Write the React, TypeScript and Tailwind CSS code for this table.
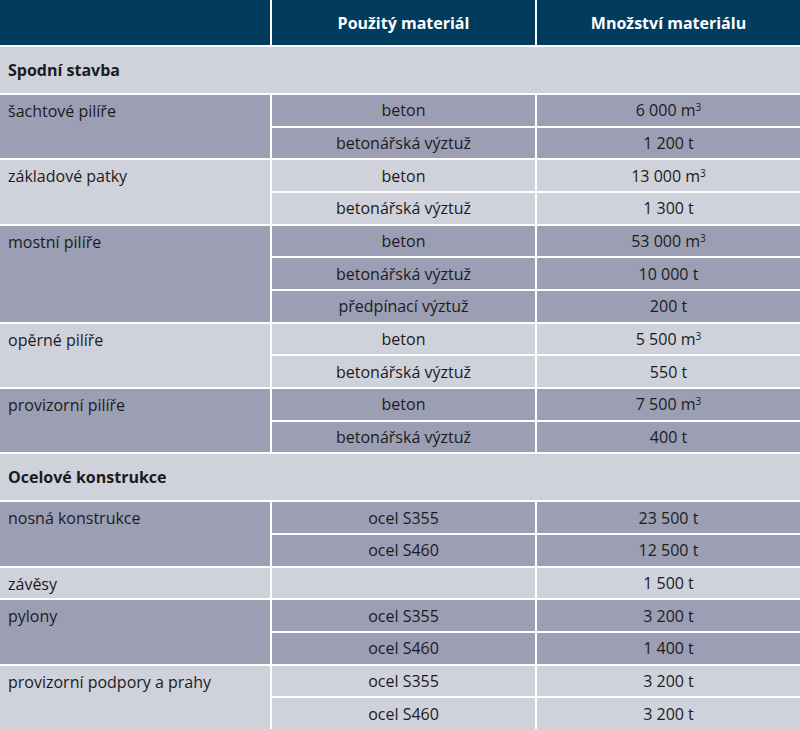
type Sub = { material: string; amount: string; m3?: boolean }
type Group = { name: string; dark: boolean; rows: Sub[] }
type Section = { title: string; groups: Group[] }

const sections: Section[] = [
  {
    title: 'Spodní stavba',
    groups: [
      { name: 'šachtové pilíře', dark: true, rows: [
        { material: 'beton', amount: '6 000 m', m3: true },
        { material: 'betonářská výztuž', amount: '1 200 t' },
      ] },
      { name: 'základové patky', dark: false, rows: [
        { material: 'beton', amount: '13 000 m', m3: true },
        { material: 'betonářská výztuž', amount: '1 300 t' },
      ] },
      { name: 'mostní pilíře', dark: true, rows: [
        { material: 'beton', amount: '53 000 m', m3: true },
        { material: 'betonářská výztuž', amount: '10 000 t' },
        { material: 'předpínací výztuž', amount: '200 t' },
      ] },
      { name: 'opěrné pilíře', dark: false, rows: [
        { material: 'beton', amount: '5 500 m', m3: true },
        { material: 'betonářská výztuž', amount: '550 t' },
      ] },
      { name: 'provizorní pilíře', dark: true, rows: [
        { material: 'beton', amount: '7 500 m', m3: true },
        { material: 'betonářská výztuž', amount: '400 t' },
      ] },
    ],
  },
  {
    title: 'Ocelové konstrukce',
    groups: [
      { name: 'nosná konstrukce', dark: true, rows: [
        { material: 'ocel S355', amount: '23 500 t' },
        { material: 'ocel S460', amount: '12 500 t' },
      ] },
      { name: 'závěsy', dark: false, rows: [
        { material: '', amount: '1 500 t' },
      ] },
      { name: 'pylony', dark: true, rows: [
        { material: 'ocel S355', amount: '3 200 t' },
        { material: 'ocel S460', amount: '1 400 t' },
      ] },
      { name: 'provizorní podpory a prahy', dark: false, rows: [
        { material: 'ocel S355', amount: '3 200 t' },
        { material: 'ocel S460', amount: '3 200 t' },
      ] },
    ],
  },
]

const span: Record<number, string> = { 1: 'row-span-1', 2: 'row-span-2', 3: 'row-span-3' }

export default function App() {
  return (
    <div
      className="w-[800px] h-[729px] bg-white text-[16px] text-[#1b1b1f] overflow-hidden"
      style={{ fontFamily: '"Open Sans", "Noto Sans", sans-serif' }}
    >
      <div className="grid h-full gap-[2px] grid-cols-[270px_263px_1fr] grid-rows-[45px_46px_repeat(11,minmax(0,1fr))_46px_repeat(7,minmax(0,1fr))]">
        {/* Header */}
        <div className="bg-[#013c5e]" />
        <div className="bg-[#013c5e] text-white font-bold flex items-center justify-center">Použitý materiál</div>
        <div className="bg-[#013c5e] text-white font-bold flex items-center justify-center">Množství materiálu</div>

        {sections.map(sec => (
          <Sec key={sec.title} sec={sec} />
        ))}
      </div>
    </div>
  )
}

function Sec({ sec }: { sec: Section }) {
  return (
    <>
      <div className="col-span-3 bg-[#cfd2db] font-bold flex items-center px-2">{sec.title}</div>
      {sec.groups.map(g => {
        const bg = g.dark ? 'bg-[#9c9fb3]' : 'bg-[#cfd2db]'
        return (
          <Grp key={g.name} g={g} bg={bg} />
        )
      })}
    </>
  )
}

function Grp({ g, bg }: { g: Group; bg: string }) {
  return (
    <>
      <div className={`${bg} ${span[g.rows.length]} px-2 pt-[4px]`}>{g.name}</div>
      {g.rows.map((r, i) => (
        <Row key={i} r={r} bg={bg} />
      ))}
    </>
  )
}

function Row({ r, bg }: { r: Sub; bg: string }) {
  return (
    <>
      <div className={`${bg} col-start-2 flex items-center justify-center`}>{r.material}</div>
      <div className={`${bg} flex items-center justify-center`}>
        {r.amount}
        {r.m3 && <sup className="text-[10px] relative -top-[3px]">3</sup>}
      </div>
    </>
  )
}
